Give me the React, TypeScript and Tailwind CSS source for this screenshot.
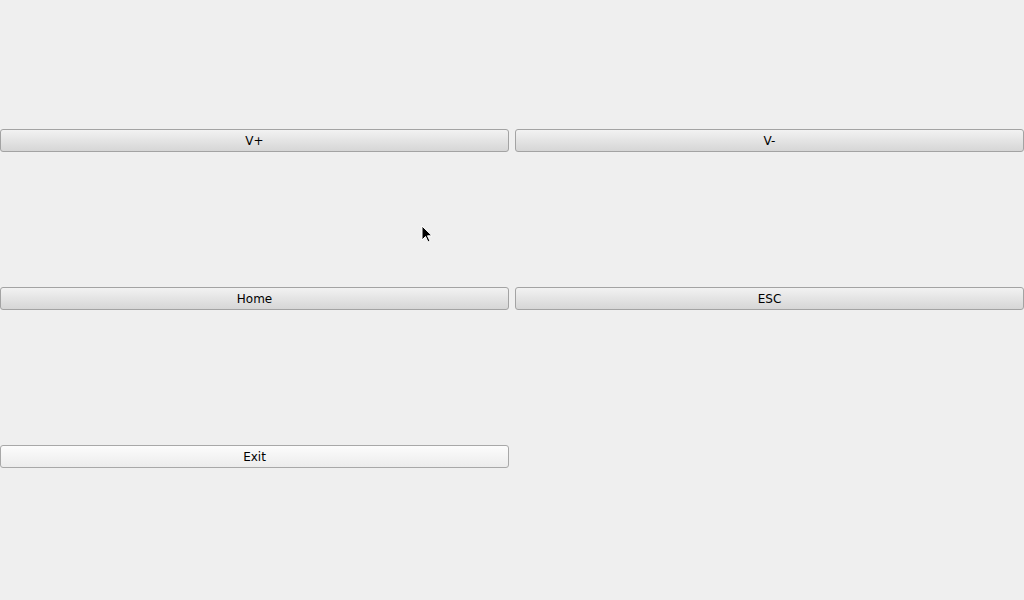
import React from "react";

const btn =
  "h-[23px] rounded-[3px] border border-[#a3a3a3] bg-gradient-to-b from-[#f2f2f2] to-[#d6d6d6] text-[12px] text-black flex items-center justify-center";

export default function App() {
  return (
    <div
      className="relative w-[1024px] h-[600px] bg-[#efefef] overflow-hidden"
      style={{ fontFamily: '"DejaVu Sans", sans-serif' }}
    >
      <div className="pt-[129px] grid grid-cols-2 gap-x-[6px] gap-y-[135px]">
        <button className={btn}>V+</button>
        <button className={btn}>V-</button>
        <button className={btn}>Home</button>
        <button className={btn}>ESC</button>
        <button className="h-[23px] rounded-[3px] border border-[#a8a8a8] bg-gradient-to-b from-[#fcfcfc] to-[#ececec] text-[12px] text-black flex items-center justify-center">
          Exit
        </button>
      </div>
      <svg
        className="absolute left-[421px] top-[225px]"
        width="14"
        height="20"
        viewBox="0 0 14 20"
      >
        <path
          d="M1 1 L1 15 L4.5 11.5 L7 17 L9 16 L6.5 10.8 L11 10.8 Z"
          fill="black"
          stroke="white"
          strokeWidth="1"
        />
      </svg>
    </div>
  );
}
